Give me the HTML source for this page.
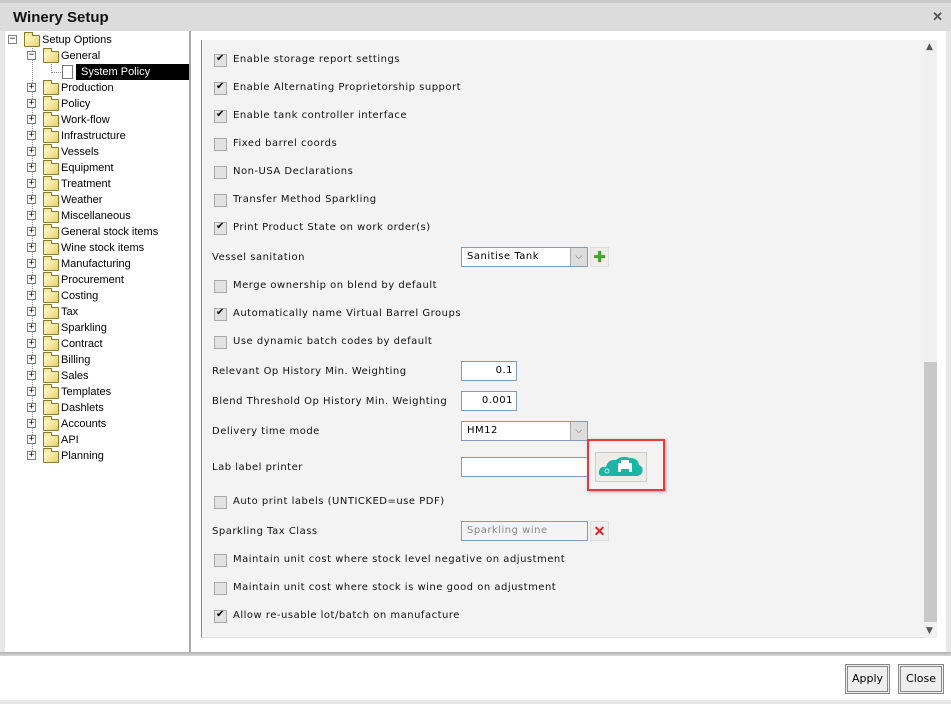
<!DOCTYPE html>
<html><head><style>
*{margin:0;padding:0;box-sizing:border-box}
body{width:951px;height:704px;background:#fff;position:relative;overflow:hidden;font-family:"DejaVu Sans","Liberation Sans",sans-serif}
.a{position:absolute}
.title{left:0;top:0;width:951px;height:31px;background:#dcdcdc;border-top:3px solid #c8c8c8}
.title span{position:absolute;left:13px;top:6px;font:bold 15px "Liberation Sans",sans-serif;color:#111}
.tree{font:11px "Liberation Sans",sans-serif;color:#000}
.ti{position:absolute;height:16px;line-height:16px;white-space:nowrap}
.pb{position:absolute;width:9px;height:9px;border:1px solid #808080;background:#fff;font:9px/7px monospace;text-align:center;color:#000}
.fd{position:absolute;width:16px;height:12px;background:linear-gradient(135deg,#fffbd0,#e8d26a);border:1px solid #8a7a30;border-radius:1px}
.fd:before{content:"";position:absolute;left:-1px;top:-4px;width:7px;height:3px;background:#f5e79a;border:1px solid #8a7a30;border-bottom:none}
.dl{position:absolute;border-left:1px dotted #888}
.dh{position:absolute;border-top:1px dotted #888}
.cont{left:201px;top:40px;width:723px;height:598px;background:#f3f3f3;border-left:1px solid #888;border-bottom:1px solid #ddd}
.row{position:absolute;font-size:10px;letter-spacing:0.5px;color:#111;line-height:14px;white-space:nowrap;margin-top:1px}
.cb{position:absolute;width:13px;height:13px;border:1px solid #aaa;background:#e2e2e2;margin-top:1px}
.cb.c:after{content:"✔";position:absolute;left:1px;top:-2px;font-size:10px;color:#000}
.in{position:absolute;height:20px;background:#fff;border:1px solid #7f9db9;font-size:10px;letter-spacing:0.5px;line-height:18px;padding-left:5px}
.dd{position:absolute;right:0;top:0;width:17px;height:18px;background:#ddd;border-left:1px solid #aaa;color:#555;font-size:9px;text-align:center;line-height:18px}
.btn{position:absolute;height:30px;border:3px double #888;background:#eee;font:11px "DejaVu Sans",sans-serif;line-height:24px;text-align:center;color:#000}
</style></head><body>
<div class="a title"><span>Winery Setup</span><div class="a" style="right:8px;top:6px;font:bold 13px sans-serif;color:#555">✕</div></div>
<div class="a" style="left:0;top:31px;width:5px;height:621px;background:#e8e8e8"></div>
<div class="a" style="left:946px;top:31px;width:5px;height:621px;background:#e8e8e8"></div>
<div class="a" style="left:189px;top:31px;width:2px;height:621px;background:#a8a8a8"></div>
<div class="a tree" style="left:0;top:0">
<div class="dl" style="left:32px;top:45px;height:412px"></div>
<div class="dl" style="left:51px;top:61px;height:12px"></div>
<div class="dh" style="left:51px;top:72px;width:10px"></div>
<div class="pb" style="left:8px;top:35px">−</div>
<div class="fd" style="left:24px;top:35px"></div><div class="ti" style="left:42px;top:32px">Setup Options</div>
<div class="pb" style="left:27px;top:51px">−</div>
<div class="fd" style="left:43px;top:51px"></div><div class="ti" style="left:61px;top:48px">General</div>
<div class="a" style="left:62px;top:65px;width:11px;height:14px;background:#fff;border:1px solid #777"></div>
<div class="a" style="left:76px;top:64px;width:113px;height:16px;background:#000"></div><div class="ti" style="left:81px;top:64px;color:#fff">System Policy</div>
<div class="pb" style="left:27px;top:83px">+</div><div class="fd" style="left:43px;top:83px"></div><div class="ti" style="left:61px;top:80px">Production</div>
<div class="pb" style="left:27px;top:99px">+</div><div class="fd" style="left:43px;top:99px"></div><div class="ti" style="left:61px;top:96px">Policy</div>
<div class="pb" style="left:27px;top:115px">+</div><div class="fd" style="left:43px;top:115px"></div><div class="ti" style="left:61px;top:112px">Work-flow</div>
<div class="pb" style="left:27px;top:131px">+</div><div class="fd" style="left:43px;top:131px"></div><div class="ti" style="left:61px;top:128px">Infrastructure</div>
<div class="pb" style="left:27px;top:147px">+</div><div class="fd" style="left:43px;top:147px"></div><div class="ti" style="left:61px;top:144px">Vessels</div>
<div class="pb" style="left:27px;top:163px">+</div><div class="fd" style="left:43px;top:163px"></div><div class="ti" style="left:61px;top:160px">Equipment</div>
<div class="pb" style="left:27px;top:179px">+</div><div class="fd" style="left:43px;top:179px"></div><div class="ti" style="left:61px;top:176px">Treatment</div>
<div class="pb" style="left:27px;top:195px">+</div><div class="fd" style="left:43px;top:195px"></div><div class="ti" style="left:61px;top:192px">Weather</div>
<div class="pb" style="left:27px;top:211px">+</div><div class="fd" style="left:43px;top:211px"></div><div class="ti" style="left:61px;top:208px">Miscellaneous</div>
<div class="pb" style="left:27px;top:227px">+</div><div class="fd" style="left:43px;top:227px"></div><div class="ti" style="left:61px;top:224px">General stock items</div>
<div class="pb" style="left:27px;top:243px">+</div><div class="fd" style="left:43px;top:243px"></div><div class="ti" style="left:61px;top:240px">Wine stock items</div>
<div class="pb" style="left:27px;top:259px">+</div><div class="fd" style="left:43px;top:259px"></div><div class="ti" style="left:61px;top:256px">Manufacturing</div>
<div class="pb" style="left:27px;top:275px">+</div><div class="fd" style="left:43px;top:275px"></div><div class="ti" style="left:61px;top:272px">Procurement</div>
<div class="pb" style="left:27px;top:291px">+</div><div class="fd" style="left:43px;top:291px"></div><div class="ti" style="left:61px;top:288px">Costing</div>
<div class="pb" style="left:27px;top:307px">+</div><div class="fd" style="left:43px;top:307px"></div><div class="ti" style="left:61px;top:304px">Tax</div>
<div class="pb" style="left:27px;top:323px">+</div><div class="fd" style="left:43px;top:323px"></div><div class="ti" style="left:61px;top:320px">Sparkling</div>
<div class="pb" style="left:27px;top:339px">+</div><div class="fd" style="left:43px;top:339px"></div><div class="ti" style="left:61px;top:336px">Contract</div>
<div class="pb" style="left:27px;top:355px">+</div><div class="fd" style="left:43px;top:355px"></div><div class="ti" style="left:61px;top:352px">Billing</div>
<div class="pb" style="left:27px;top:371px">+</div><div class="fd" style="left:43px;top:371px"></div><div class="ti" style="left:61px;top:368px">Sales</div>
<div class="pb" style="left:27px;top:387px">+</div><div class="fd" style="left:43px;top:387px"></div><div class="ti" style="left:61px;top:384px">Templates</div>
<div class="pb" style="left:27px;top:403px">+</div><div class="fd" style="left:43px;top:403px"></div><div class="ti" style="left:61px;top:400px">Dashlets</div>
<div class="pb" style="left:27px;top:419px">+</div><div class="fd" style="left:43px;top:419px"></div><div class="ti" style="left:61px;top:416px">Accounts</div>
<div class="pb" style="left:27px;top:435px">+</div><div class="fd" style="left:43px;top:435px"></div><div class="ti" style="left:61px;top:432px">API</div>
<div class="pb" style="left:27px;top:451px">+</div><div class="fd" style="left:43px;top:451px"></div><div class="ti" style="left:61px;top:448px">Planning</div>
</div>

<div class="a cont"></div>
<div class="a" style="left:924px;top:40px;width:13px;height:598px;background:#f0f0f0"></div>
<div class="a" style="left:924px;top:362px;width:13px;height:260px;background:#c8c8c8"></div>
<div class="a" style="left:926px;top:42px;font-size:9px;color:#555">▲</div>
<div class="a" style="left:926px;top:626px;font-size:9px;color:#555">▼</div>

<div class="cb c" style="left:214px;top:53px"></div><div class="row" style="left:233px;top:52px">Enable storage report settings</div>
<div class="cb c" style="left:214px;top:81px"></div><div class="row" style="left:233px;top:80px">Enable Alternating Proprietorship support</div>
<div class="cb c" style="left:214px;top:109px"></div><div class="row" style="left:233px;top:108px">Enable tank controller interface</div>
<div class="cb" style="left:214px;top:137px"></div><div class="row" style="left:233px;top:136px">Fixed barrel coords</div>
<div class="cb" style="left:214px;top:165px"></div><div class="row" style="left:233px;top:164px">Non-USA Declarations</div>
<div class="cb" style="left:214px;top:193px"></div><div class="row" style="left:233px;top:192px">Transfer Method Sparkling</div>
<div class="cb c" style="left:214px;top:221px"></div><div class="row" style="left:233px;top:220px">Print Product State on work order(s)</div>
<div class="row" style="left:212px;top:250px">Vessel sanitation</div>
<div class="in" style="left:461px;top:247px;width:127px">Sanitise Tank<div class="dd">⌵</div></div>
<div class="a" style="left:590px;top:247px;width:19px;height:20px;background:#eee;border:1px solid #ddd;color:#3a3;font-size:15px;line-height:18px;text-align:center;text-shadow:0 0 1px #e90">✚</div>
<div class="cb" style="left:214px;top:279px"></div><div class="row" style="left:233px;top:278px">Merge ownership on blend by default</div>
<div class="cb c" style="left:214px;top:307px"></div><div class="row" style="left:233px;top:306px">Automatically name Virtual Barrel Groups</div>
<div class="cb" style="left:214px;top:335px"></div><div class="row" style="left:233px;top:334px">Use dynamic batch codes by default</div>
<div class="row" style="left:212px;top:364px">Relevant Op History Min. Weighting</div>
<div class="in" style="left:461px;top:361px;width:56px;text-align:right;padding-right:3px">0.1</div>
<div class="row" style="left:212px;top:394px">Blend Threshold Op History Min. Weighting</div>
<div class="in" style="left:461px;top:391px;width:56px;text-align:right;padding-right:3px">0.001</div>
<div class="row" style="left:212px;top:424px">Delivery time mode</div>
<div class="in" style="left:461px;top:421px;width:127px">HM12<div class="dd">⌵</div></div>
<div class="row" style="left:212px;top:460px">Lab label printer</div>
<div class="in" style="left:461px;top:457px;width:127px"></div>
<div class="a" style="left:587px;top:439px;width:78px;height:52px;border:2px solid #e83a3a;box-shadow:1px 1px 3px #aaa"></div>
<div class="a" style="left:595px;top:452px;width:52px;height:30px;background:#eeece6;border:1px solid #ccc"></div>
<svg class="a" style="left:598px;top:454px" width="46" height="26" viewBox="0 0 46 26"><path d="M4 22 Q0 22 1 17 Q2 12 8 13 Q10 5 18 6 Q24 1 32 4 Q40 4 41 11 Q46 13 44 19 Q42 22 38 22 Z" fill="#1fb3a8"/><rect x="20" y="9" width="14" height="9" rx="1" fill="#fff"/><rect x="23" y="6" width="8" height="4" fill="#fff"/><rect x="23" y="15" width="8" height="3" fill="#1fb3a8"/><circle cx="9" cy="17" r="2" fill="none" stroke="#bfeeea"/></svg>
<div class="cb" style="left:214px;top:495px"></div><div class="row" style="left:233px;top:494px">Auto print labels (UNTICKED=use PDF)</div>
<div class="row" style="left:212px;top:524px">Sparkling Tax Class</div>
<div class="in" style="left:461px;top:521px;width:127px;background:#f4f4f4;color:#888">Sparkling wine</div>
<div class="a" style="left:590px;top:521px;width:19px;height:20px;background:#eee;border:1px solid #ddd;color:#d22;font:bold 14px/18px sans-serif;text-align:center">✕</div>
<div class="cb" style="left:214px;top:553px"></div><div class="row" style="left:233px;top:552px">Maintain unit cost where stock level negative on adjustment</div>
<div class="cb" style="left:214px;top:581px"></div><div class="row" style="left:233px;top:580px">Maintain unit cost where stock is wine good on adjustment</div>
<div class="cb c" style="left:214px;top:609px"></div><div class="row" style="left:233px;top:608px">Allow re-usable lot/batch on manufacture</div>

<div class="a" style="left:0;top:652px;width:951px;height:4px;background:linear-gradient(#b0b0b0,#d8d8d8)"></div>
<div class="btn" style="left:845px;top:664px;width:45px">Apply</div>
<div class="btn" style="left:898px;top:664px;width:46px">Close</div>
<div class="a" style="left:0;top:700px;width:951px;height:4px;background:#e8e8e8"></div>
</body></html>
